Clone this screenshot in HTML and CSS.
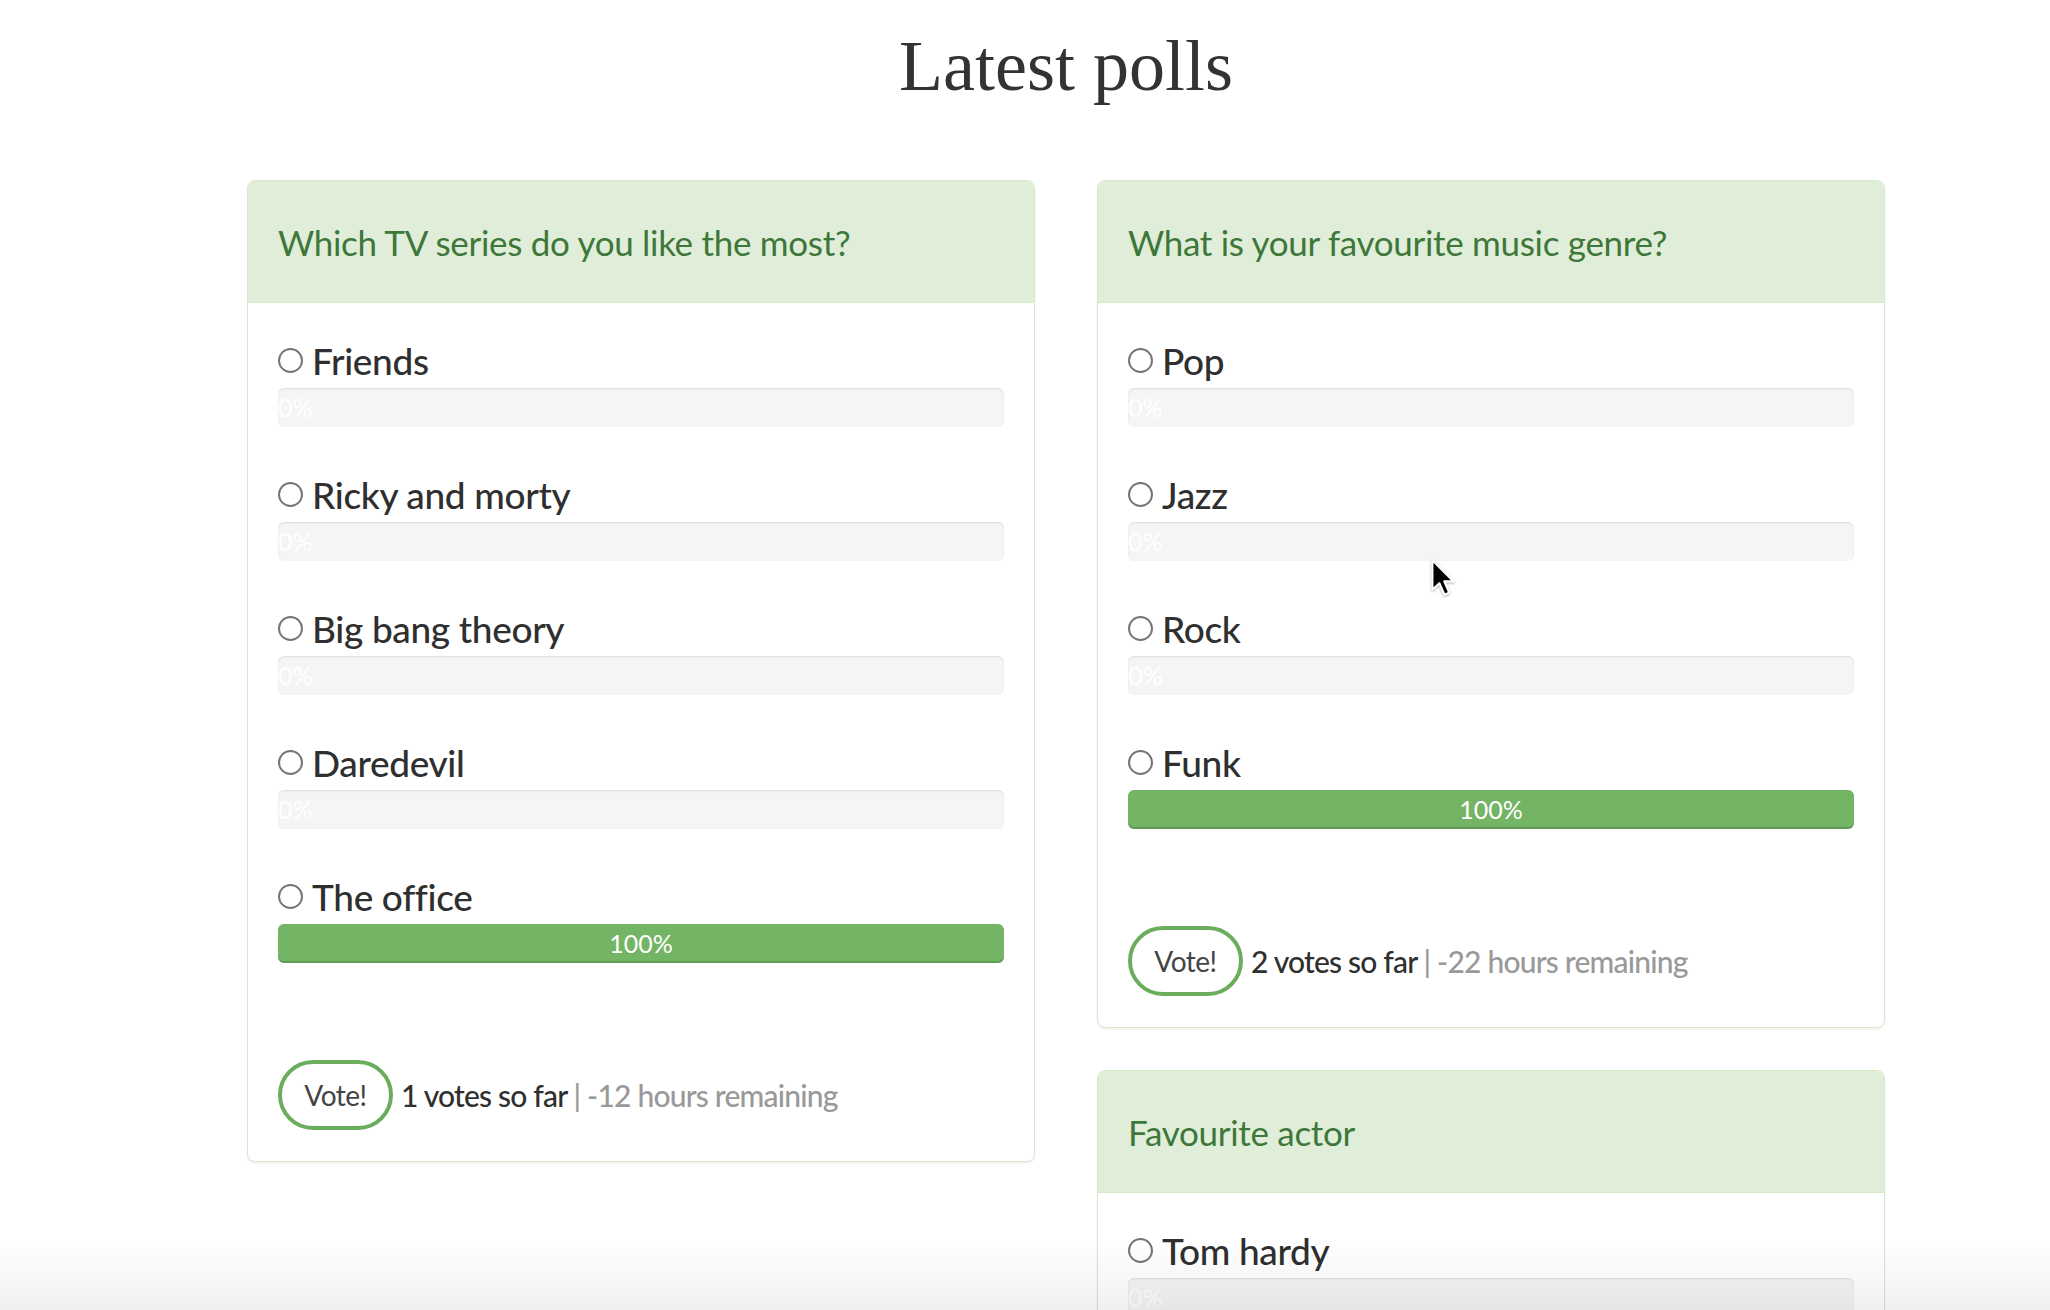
FILE: index.html
```html
<!DOCTYPE html>
<html lang="en">
<head>
<meta charset="utf-8">
<title>Latest polls</title>
<link rel="stylesheet" href="styles.css">
</head>
<body>
<main class="page">
  <h1 class="page-title">Latest polls</h1>
  <div class="polls">
    <div class="col">
      <section class="poll">
        <header class="poll-head"><h3 class="poll-title">Which TV series do you like the most?</h3></header>
        <div class="poll-body">
          <div class="option">
            <label class="option-label"><input type="radio" class="radio" name="p1">Friends</label>
            <div class="progress"><div class="bar" style="width:0%">0%</div></div>
          </div>
          <div class="option">
            <label class="option-label"><input type="radio" class="radio" name="p1">Ricky and morty</label>
            <div class="progress"><div class="bar" style="width:0%">0%</div></div>
          </div>
          <div class="option">
            <label class="option-label"><input type="radio" class="radio" name="p1">Big bang theory</label>
            <div class="progress"><div class="bar" style="width:0%">0%</div></div>
          </div>
          <div class="option">
            <label class="option-label"><input type="radio" class="radio" name="p1">Daredevil</label>
            <div class="progress"><div class="bar" style="width:0%">0%</div></div>
          </div>
          <div class="option">
            <label class="option-label"><input type="radio" class="radio" name="p1">The office</label>
            <div class="progress"><div class="bar" style="width:100%">100%</div></div>
          </div>
          <div class="poll-foot">
            <button class="vote" type="button">Vote!</button>
            <span class="meta">1 votes so far <span class="remaining">| -12 hours remaining</span></span>
          </div>
        </div>
      </section>
    </div>
    <div class="col">
      <section class="poll">
        <header class="poll-head"><h3 class="poll-title">What is your favourite music genre?</h3></header>
        <div class="poll-body">
          <div class="option">
            <label class="option-label"><input type="radio" class="radio" name="p2">Pop</label>
            <div class="progress"><div class="bar" style="width:0%">0%</div></div>
          </div>
          <div class="option">
            <label class="option-label"><input type="radio" class="radio" name="p2">Jazz</label>
            <div class="progress"><div class="bar" style="width:0%">0%</div></div>
          </div>
          <div class="option">
            <label class="option-label"><input type="radio" class="radio" name="p2">Rock</label>
            <div class="progress"><div class="bar" style="width:0%">0%</div></div>
          </div>
          <div class="option">
            <label class="option-label"><input type="radio" class="radio" name="p2">Funk</label>
            <div class="progress"><div class="bar" style="width:100%">100%</div></div>
          </div>
          <div class="poll-foot">
            <button class="vote" type="button">Vote!</button>
            <span class="meta">2 votes so far <span class="remaining">| -22 hours remaining</span></span>
          </div>
        </div>
      </section>
      <section class="poll">
        <header class="poll-head"><h3 class="poll-title">Favourite actor</h3></header>
        <div class="poll-body">
          <div class="option">
            <label class="option-label"><input type="radio" class="radio" name="p3">Tom hardy</label>
            <div class="progress"><div class="bar" style="width:0%">0%</div></div>
          </div>
        </div>
      </section>
    </div>
  </div>
</main>
<svg class="cursor" width="30" height="40" viewBox="0 0 20 27" aria-hidden="true">
  <path d="M1.5 1.5 L1.5 21.5 L6.2 17 L9.6 24.8 L12.8 23.4 L9.5 15.8 L15.8 15.8 Z" fill="#000" stroke="#fff" stroke-width="1.4" stroke-linejoin="round"/>
</svg>
<div class="fade" aria-hidden="true"></div>
</body>
</html>
```
FILE: styles.css
```css
html, body {
  margin: 0;
  padding: 0;
}

body {
  background: #fff;
  font-family: Lato, "Open Sans", sans-serif;
  color: #333;
  overflow: hidden;
  position: relative;
  height: 1310px;
}

.page {
  width: 1638px;
  padding: 30px 0 0 247px;
}

.page-title {
  margin: 0 0 78px;
  font-family: "Liberation Serif", serif;
  font-weight: 400;
  font-size: 72px;
  line-height: 72px;
  color: #333;
  text-align: center;
}

.polls {
  display: grid;
  grid-template-columns: 788px 788px;
  column-gap: 62px;
  align-items: start;
}

.col {
  display: flex;
  flex-direction: column;
  gap: 42px;
}

.poll {
  border: 1px solid #d6e9c6;
  border-radius: 8px;
  background: #fff;
  box-shadow: 0 2px 2px rgba(0, 0, 0, 0.05);
  overflow: hidden;
}

.poll-head {
  height: 121px;
  display: flex;
  align-items: center;
  padding: 0 30px;
  background: #e0eed9;
  border-bottom: 1px solid #d6e9c6;
}

.poll-title {
  margin: 0;
  font-size: 35px;
  font-weight: 400;
  letter-spacing: -0.3px;
  color: #3e773a;
}

.poll-body {
  padding: 34px 30px 31px;
}

.option {
  margin-bottom: 44px;
}

.option-label {
  display: flex;
  align-items: center;
  gap: 9px;
  height: 46px;
  margin-bottom: 5px;
  font-size: 37px;
  font-weight: 500;
  letter-spacing: -0.35px;
  color: #2f2f2f;
}

.radio {
  appearance: none;
  -webkit-appearance: none;
  width: 25px;
  height: 25px;
  margin: 0;
  border: 2px solid #767676;
  border-radius: 50%;
  background: #fff;
  flex: none;
}

.progress {
  height: 39px;
  border-radius: 6px;
  background: #f5f5f5;
  box-shadow: inset 0 1px 2px rgba(0, 0, 0, 0.1);
}

.bar {
  height: 39px;
  line-height: 39px;
  border-radius: 6px;
  background: #73b465;
  box-shadow: inset 0 -2px 0 rgba(0, 0, 0, 0.15);
  color: #fff;
  font-size: 25px;
  text-align: center;
  white-space: nowrap;
}

.poll-foot {
  margin-top: 97px;
  display: flex;
  align-items: center;
  font-size: 30px;
  font-weight: 500;
  letter-spacing: -0.8px;
}

.vote {
  width: 115px;
  height: 70px;
  padding: 0;
  border: 4px solid #6aae5d;
  border-radius: 35px;
  background: #fff;
  font-family: Lato, "Open Sans", sans-serif;
  font-size: 28px;
  letter-spacing: -0.5px;
  color: #444;
  flex: none;
}

.meta {
  margin-left: 8px;
  color: #2f2f2f;
}

.remaining {
  color: #999;
}

.cursor {
  position: absolute;
  left: 1430px;
  top: 558px;
  filter: drop-shadow(0 1px 1px rgba(0, 0, 0, 0.3));
}

.fade {
  position: fixed;
  left: 0;
  right: 0;
  bottom: 0;
  height: 70px;
  background: linear-gradient(to bottom, rgba(0, 0, 0, 0), rgba(0, 0, 0, 0.06));
  pointer-events: none;
}
```
